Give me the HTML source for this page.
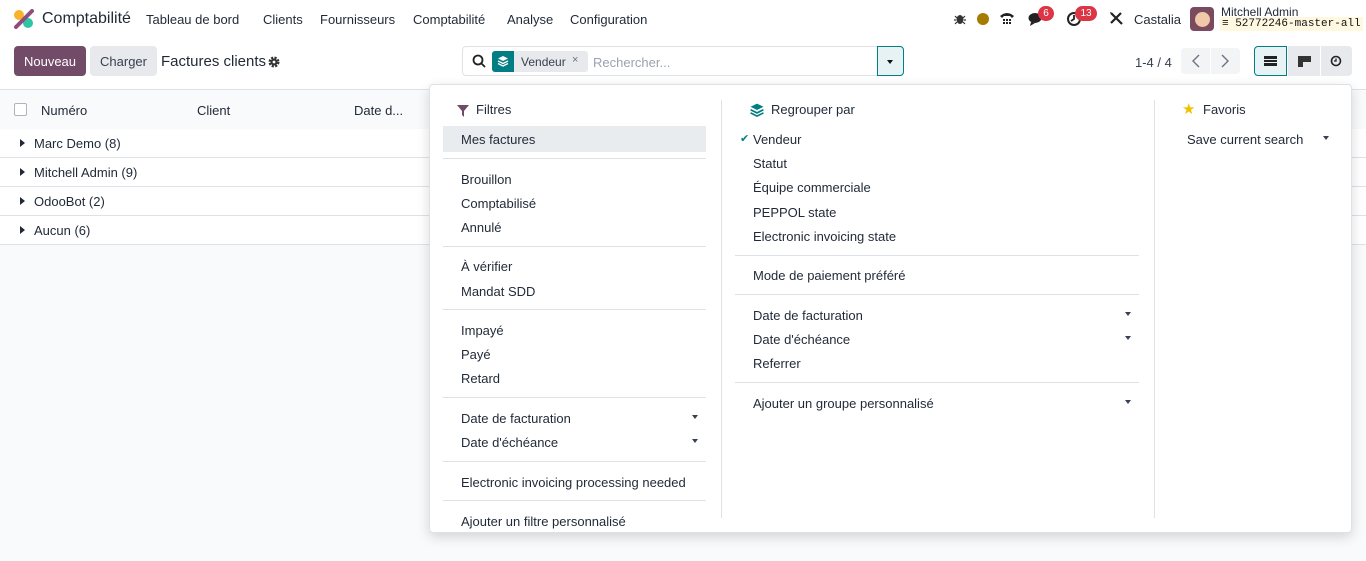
<!DOCTYPE html>
<html><head><meta charset="utf-8"><style>
*{box-sizing:border-box;margin:0;padding:0}
body{width:1366px;height:561px;overflow:hidden;background:#f9fafb;font-family:"Liberation Sans",sans-serif;font-size:13px;color:#374151;position:relative}
.abs{position:absolute}
.nav{left:0;top:0;width:1366px;height:40px;background:#fff}
.nav span{position:absolute;top:12px;font-size:13px;color:#1f2937}
.cp{left:0;top:40px;width:1366px;height:50px;background:#fff;border-bottom:1px solid #dee2e6}
.btn{position:absolute;height:30px;border-radius:4px;line-height:32px;text-align:center;font-size:13px}
.th{left:0;top:91px;width:1366px;height:38px;background:#f9fafb}
.row{position:absolute;left:0;width:1366px;height:29px;background:#fff;border-bottom:1px solid #dee2e6}
.row span{position:absolute;left:34px;top:7px;color:#1f2937}
.row i{position:absolute;left:20px;top:10px;width:0;height:0;border-left:5px solid #1f2937;border-top:4px solid transparent;border-bottom:4px solid transparent}
.dd{left:429px;top:84px;width:923px;height:449px;background:#fff;border:1px solid #dee2e6;border-radius:4px;box-shadow:0 4px 12px rgba(0,0,0,.15)}
.it{position:absolute;font-size:13px;color:#1f2937;margin-top:-1px}
.hr{position:absolute;height:1px;background:#dee2e6}
.car{position:absolute;width:0;height:0;border-left:3.5px solid transparent;border-right:3.5px solid transparent;border-top:4px solid #374151}
.badge{position:absolute;background:#dc3545;color:#fff;font-size:10px;border-radius:8px;height:15px;line-height:15px;text-align:center}
</style></head><body>
<div class="abs nav">
  <svg class="abs" style="left:13px;top:9px" width="22" height="20" viewBox="0 0 22 20"><circle cx="6" cy="6" r="5" fill="#f9b32a"/><circle cx="15" cy="14" r="5" fill="#2ec5a7"/><path d="M3 18 L19 2" stroke="#8f4d7d" stroke-width="4" stroke-linecap="round"/></svg>
  <span style="left:42px;top:10px;font-size:16px">Comptabilité</span>
  <span style="left:146px">Tableau de bord</span>
  <span style="left:263px">Clients</span>
  <span style="left:320px">Fournisseurs</span>
  <span style="left:413px">Comptabilité</span>
  <span style="left:507px">Analyse</span>
  <span style="left:570px">Configuration</span>
  <svg class="abs" style="left:954px;top:12px" width="12" height="13" viewBox="0 0 12 13"><ellipse cx="6" cy="7.5" rx="3.5" ry="4.5" fill="#333"/><path d="M1 4l2 2M11 4l-2 2M0 8h2M12 8h-2M1 12l2-2M11 12l-2-2" stroke="#333" stroke-width="1.2"/></svg>
  <div class="abs" style="left:977px;top:13px;width:12px;height:12px;border-radius:50%;background:#a57c00"></div>
  <svg class="abs" style="left:999px;top:11px" width="16" height="15" viewBox="0 0 16 15"><path d="M1 5 Q8 -1 15 5 L13 7 L11 5 L5 5 L3 7Z" fill="#222"/><g fill="#222"><rect x="4" y="8" width="2" height="2"/><rect x="7" y="8" width="2" height="2"/><rect x="10" y="8" width="2" height="2"/><rect x="4" y="11" width="2" height="2"/><rect x="7" y="11" width="2" height="2"/><rect x="10" y="11" width="2" height="2"/></g></svg>
  <svg class="abs" style="left:1028px;top:12px" width="17" height="15" viewBox="0 0 17 15"><ellipse cx="7" cy="6" rx="6.5" ry="5" fill="#222"/><path d="M3 10 L2 14 L7 11Z" fill="#222"/></svg>
  <div class="badge" style="left:1038px;top:6px;width:16px">6</div>
  <svg class="abs" style="left:1066px;top:11px" width="16" height="16" viewBox="0 0 16 16"><circle cx="8" cy="8" r="6" fill="none" stroke="#222" stroke-width="2"/><path d="M8 4v4l-3 2" stroke="#222" stroke-width="1.8" fill="none"/></svg>
  <div class="badge" style="left:1075px;top:6px;width:22px">13</div>
  <svg class="abs" style="left:1109px;top:11px" width="15" height="15" viewBox="0 0 15 15"><path d="M3 3 L13 13 M12 2 L2 12" stroke="#222" stroke-width="2.2"/><path d="M1 1 L4 2 L2 4Z" fill="#222"/></svg>
  <span style="left:1134px">Castalia</span>
  <div class="abs" style="left:1190px;top:7px;width:24px;height:24px;border-radius:4px;background:#7a4b5e"><div style="margin:5px auto;width:15px;height:15px;border-radius:50%;background:#f1c9a8"></div></div>
  <span style="left:1221px;top:5px;font-size:12px">Mitchell Admin</span>
  <div class="abs" style="left:1220px;top:17px;height:14px;background:#fff8e1;padding:0 2px;font-family:'Liberation Mono',monospace;font-size:11px;line-height:14px;color:#111">≡ 52772246-master-all</div>
</div>
<div class="abs cp">
  <div class="btn" style="left:14px;top:6px;width:72px;background:#714b67;color:#fff">Nouveau</div>
  <div class="btn" style="left:90px;top:6px;width:67px;background:#e7e9ed;color:#374151">Charger</div>
  <span class="abs" style="left:161px;top:13px;font-size:15px;color:#1f2937">Factures clients</span>
  <svg class="abs" style="left:268px;top:16px" width="12" height="12" viewBox="0 0 12 12"><circle cx="6" cy="6" r="4" fill="none" stroke="#333" stroke-width="3" stroke-dasharray="2 1.2"/><circle cx="6" cy="6" r="3.5" fill="#333"/><circle cx="6" cy="6" r="1.4" fill="#fff"/></svg>
  <div class="abs" style="left:462px;top:6px;width:442px;height:30px;border:1px solid #dee2e6;border-radius:4px;background:#fff"></div>
  <svg class="abs" style="left:472px;top:14px" width="14" height="14" viewBox="0 0 14 14"><circle cx="6" cy="6" r="4.5" fill="none" stroke="#222" stroke-width="1.8"/><path d="M9.5 9.5L13 13" stroke="#222" stroke-width="1.8"/></svg>
  <div class="abs" style="left:492px;top:11px;width:96px;height:21px;background:#e7e9ed;border-radius:3px"></div>
  <div class="abs" style="left:492px;top:11px;width:22px;height:21px;background:#017e84;border-radius:3px 0 0 3px"></div>
  <svg class="abs" style="left:497px;top:15px" width="12" height="12" viewBox="0 0 12 12"><path d="M6 1L11 3.5L6 6L1 3.5Z" fill="#fff"/><path d="M1 6L6 8.5L11 6M1 8.5L6 11L11 8.5" stroke="#fff" stroke-width="1.3" fill="none"/></svg>
  <span class="abs" style="left:521px;top:15px;font-size:12px;color:#374151">Vendeur</span>
  <span class="abs" style="left:572px;top:14px;font-size:11px;color:#6b7280">×</span>
  <span class="abs" style="left:593px;top:15px;color:#9ca3af">Rechercher...</span>
  <div class="abs" style="left:877px;top:6px;width:27px;height:30px;border:1px solid #017e84;background:#e6f2f3;border-radius:0 4px 4px 0"></div>
  <div class="car" style="left:887px;top:20px;border-top-color:#111"></div>
  <span class="abs" style="left:1135px;top:15px;color:#374151">1-4 / 4</span>
  <div class="abs" style="left:1181px;top:8px;width:59px;height:26px;background:#f3f4f6;border-radius:4px"></div>
  <div class="abs" style="left:1210px;top:8px;width:1px;height:26px;background:#fff"></div>
  <svg class="abs" style="left:1191px;top:14px" width="10" height="14" viewBox="0 0 10 14"><path d="M8 1L2 7L8 13" stroke="#6b7280" stroke-width="1.4" fill="none"/></svg>
  <svg class="abs" style="left:1220px;top:14px" width="10" height="14" viewBox="0 0 10 14"><path d="M2 1L8 7L2 13" stroke="#6b7280" stroke-width="1.4" fill="none"/></svg>
  <div class="abs" style="left:1254px;top:6px;width:33px;height:30px;background:#e6f2f3;border:1px solid #017e84;border-radius:4px 0 0 4px"></div>
  <div class="abs" style="left:1264px;top:16px;width:13px;height:10px;border-top:3px solid #222;border-bottom:3px solid #222"><div style="margin-top:1px;height:2px;background:#222"></div></div>
  <div class="abs" style="left:1288px;top:6px;width:32px;height:30px;background:#e7e9ed"></div>
  <div class="abs" style="left:1321px;top:6px;width:31px;height:30px;background:#e7e9ed;border-radius:0 4px 4px 0"></div>
  <div class="abs" style="left:1298px;top:16px;width:5px;height:11px;background:#333"></div><div class="abs" style="left:1303px;top:16px;width:8px;height:6px;background:#333"></div>
  <svg class="abs" style="left:1330px;top:15px" width="12" height="12" viewBox="0 0 12 12"><circle cx="6" cy="6" r="4.5" fill="none" stroke="#222" stroke-width="1.6"/><path d="M6 3.5V6H4" stroke="#222" stroke-width="1.3" fill="none"/></svg>
</div>
<div class="abs th">
  <div class="abs" style="left:14px;top:12px;width:13px;height:13px;border:1px solid #adb5bd;border-radius:2px;background:#fff"></div>
  <span class="abs" style="left:41px;top:12px;color:#1f2937">Numéro</span>
  <span class="abs" style="left:197px;top:12px;color:#1f2937">Client</span>
  <span class="abs" style="left:354px;top:12px;color:#1f2937">Date d...</span>
</div>
<div class="row" style="top:129px"><i></i><span>Marc Demo (8)</span></div>
<div class="row" style="top:158px"><i></i><span>Mitchell Admin (9)</span></div>
<div class="row" style="top:187px"><i></i><span>OdooBot (2)</span></div>
<div class="row" style="top:216px"><i></i><span>Aucun (6)</span></div>

<div class="abs dd">
  <svg class="abs" style="left:27px;top:20px" width="12" height="12" viewBox="0 0 12 12"><path d="M0 0H12L7 6V12L5 10V6Z" fill="#714b67"/></svg>
  <span class="it" style="left:46px;top:18px">Filtres</span>
  <div class="abs" style="left:13px;top:41px;width:263px;height:26px;background:#e9ecef"></div>
  <span class="it" style="left:31px;top:48px">Mes factures</span>
  <div class="hr" style="left:13px;top:73px;width:263px"></div>
  <span class="it" style="left:31px;top:88px">Brouillon</span>
  <span class="it" style="left:31px;top:112px">Comptabilisé</span>
  <span class="it" style="left:31px;top:136px">Annulé</span>
  <div class="hr" style="left:13px;top:161px;width:263px"></div>
  <span class="it" style="left:31px;top:175px">À vérifier</span>
  <span class="it" style="left:31px;top:200px">Mandat SDD</span>
  <div class="hr" style="left:13px;top:224px;width:263px"></div>
  <span class="it" style="left:31px;top:239px">Impayé</span>
  <span class="it" style="left:31px;top:263px">Payé</span>
  <span class="it" style="left:31px;top:287px">Retard</span>
  <div class="hr" style="left:13px;top:312px;width:263px"></div>
  <span class="it" style="left:31px;top:327px">Date de facturation</span><div class="car" style="left:262px;top:330px"></div>
  <span class="it" style="left:31px;top:351px">Date d'échéance</span><div class="car" style="left:262px;top:354px"></div>
  <div class="hr" style="left:13px;top:376px;width:263px"></div>
  <span class="it" style="left:31px;top:391px">Electronic invoicing processing needed</span>
  <div class="hr" style="left:13px;top:415px;width:263px"></div>
  <span class="it" style="left:31px;top:430px">Ajouter un filtre personnalisé</span>

  <div class="hr" style="left:291px;top:15px;width:1px;height:418px"></div>
  <svg class="abs" style="left:320px;top:18px" width="14" height="14" viewBox="0 0 12 12"><path d="M6 0.5L11.5 3.2L6 6L0.5 3.2Z" fill="#017e84"/><path d="M0.5 5.8L6 8.5L11.5 5.8M0.5 8.5L6 11.2L11.5 8.5" stroke="#017e84" stroke-width="1.4" fill="none"/></svg>
  <span class="it" style="left:341px;top:18px">Regrouper par</span>
  <span class="it" style="left:310px;top:48px;color:#017e84;font-size:11px">✔</span>
  <span class="it" style="left:323px;top:48px">Vendeur</span>
  <span class="it" style="left:323px;top:72px">Statut</span>
  <span class="it" style="left:323px;top:96px">Équipe commerciale</span>
  <span class="it" style="left:323px;top:121px">PEPPOL state</span>
  <span class="it" style="left:323px;top:145px">Electronic invoicing state</span>
  <div class="hr" style="left:305px;top:170px;width:404px"></div>
  <span class="it" style="left:323px;top:184px">Mode de paiement préféré</span>
  <div class="hr" style="left:305px;top:209px;width:404px"></div>
  <span class="it" style="left:323px;top:224px">Date de facturation</span><div class="car" style="left:695px;top:227px"></div>
  <span class="it" style="left:323px;top:248px">Date d'échéance</span><div class="car" style="left:695px;top:251px"></div>
  <span class="it" style="left:323px;top:272px">Referrer</span>
  <div class="hr" style="left:305px;top:297px;width:404px"></div>
  <span class="it" style="left:323px;top:312px">Ajouter un groupe personnalisé</span><div class="car" style="left:695px;top:315px"></div>

  <div class="hr" style="left:724px;top:15px;width:1px;height:418px"></div>
  <span class="abs" style="left:752px;top:15px;color:#f3c000;font-size:15px">★</span>
  <span class="it" style="left:773px;top:18px">Favoris</span>
  <span class="it" style="left:757px;top:48px">Save current search</span><div class="car" style="left:893px;top:51px"></div>
</div>
</body></html>
